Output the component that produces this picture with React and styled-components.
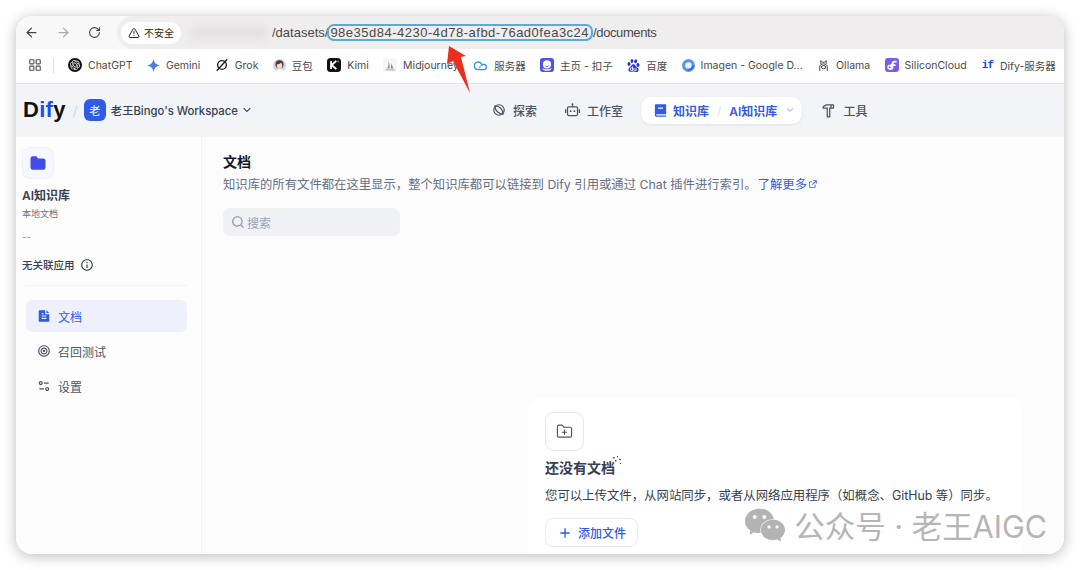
import React from 'react'
import styled, {createGlobalStyle} from 'styled-components'
import {ArrowLeft, ArrowRight, RotateCw, TriangleAlert, LayoutGrid, FolderPlus} from 'lucide-react'
import {SiOpenai, SiBaidu, SiWechat} from 'react-icons/si'
import {RiRobot2Line, RiHammerLine, RiBook2Fill, RiFileTextFill, RiFocus2Line, RiEqualizer2Line, RiSearchLine, RiAddLine, RiArrowDownSLine, RiExternalLinkLine, RiInformationLine} from 'react-icons/ri'

const sans = `Inter, "Noto Sans CJK SC", sans-serif`

const GlobalStyle = createGlobalStyle`
   html, body {margin:0; padding:0; background:#fff; font-family:${sans};}
   * {box-sizing:border-box;}
`

const Star = () => (
   <svg width="13" height="13" viewBox="0 0 24 24"><path fill="#4f7fd8" d="M12 0c1 7 5 11 12 12-7 1-11 5-12 12-1-7-5-11-12-12 7-1 11-5 12-12z" /></svg>
)
const GrokIcon = () => (
   <svg width="14" height="14" viewBox="0 0 24 24" fill="none" stroke="#222" strokeWidth="2.4"><circle cx="12" cy="12" r="7.5" /><path d="M21 2 3 22" /></svg>
)
const DoubaoIcon = () => (
   <svg width="13" height="15" viewBox="0 0 24 24"><circle cx="12" cy="12" r="12" fill="#c9d8f0" /><circle cx="12" cy="10" r="7.5" fill="#5b3a2c" /><ellipse cx="12" cy="12" rx="5" ry="6" fill="#f6dccc" /><path fill="#5b3a2c" d="M7 10c2 0 7-1 8-4l2 4-1-6H8z" /><path fill="#fff" d="M6 24c0-4 3-6 6-6s6 2 6 6z" /></svg>
)
const KimiIcon = () => (
   <svg width="14" height="14" viewBox="0 0 24 24"><rect width="24" height="24" rx="6" fill="#111" /><path fill="none" stroke="#fff" strokeWidth="3.2" d="M7 5v14M16 5l-8 7 8 7" /><circle cx="19" cy="6" r="1.6" fill="#2a8cff" /></svg>
)
const SailIcon = () => (
   <svg width="14" height="14" viewBox="0 0 24 24"><rect width="24" height="24" rx="3" fill="#f6f6f7" /><path fill="#8a8a8a" d="M9 5c1 4 1 9-2 13h4c1-5 0-9-2-13zM13 8c2 3 4 7 5 10h-5c1-3 1-7 0-10zM4 19.500h16V21H4z" /></svg>
)
const CloudIcon = () => (
   <svg width="15" height="14" viewBox="0 0 24 24" fill="none" strokeWidth="2.2"><path stroke="#2f8fe0" d="M17.500 20H8a6.500 6.500 0 1 1 6-9h3.500a4.500 4.500 0 1 1 0 9Z" /><path stroke="#58c0ee" d="M9 20c0-4 3-7 7-8" /></svg>
)
const CozeIcon = () => (
   <svg width="14" height="14" viewBox="0 0 24 24"><rect width="24" height="24" rx="5" fill="#4d53e8" /><circle cx="12" cy="11" r="7" fill="#fff" /><path fill="#fff" d="M4 17c3 3 13 3 16 0-1 4-4 5-8 5s-7-1-8-5z" /><path fill="#4d53e8" d="M8 12c2 2.500 6 2.500 8 0-1 4-7 4-8 0z" /></svg>
)
const ImagenIcon = () => (
   <svg width="13" height="13" viewBox="0 0 24 24"><circle cx="12" cy="12" r="12" fill="#5a96ea" /><circle cx="12" cy="12" r="6" fill="#eaf2ff" /><path fill="#2f6fd0" d="M12 18a6 6 0 0 0 6-6h4a10 10 0 0 1-13 9z" /></svg>
)
const OllamaIcon = () => (
   <svg width="13" height="15" viewBox="0 0 24 24" fill="none" stroke="#444" strokeWidth="1.8"><path d="M7 9V3l3 3h4l3-3v6" /><path d="M5 22v-7c0-4 3-6 7-6s7 2 7 6v7" /><ellipse cx="12" cy="15" rx="4" ry="3" /></svg>
)
const SiliconIcon = () => (
   <svg width="14" height="14" viewBox="0 0 24 24"><rect width="24" height="24" rx="5" fill="#7c5ce6" /><path fill="none" stroke="#fff" strokeWidth="3" d="M20 6h-3a4 4 0 0 0-4 4v5a4 4 0 0 1-4 4M9 12h9" /><circle cx="8" cy="16" r="3" fill="none" stroke="#fff" strokeWidth="2.500" /></svg>
)
const ExploreIcon = () => (
   <svg width="14" height="14" viewBox="0 0 24 24" fill="none" stroke="#4b5563" strokeWidth="2"><circle cx="12" cy="12" r="9" /><path d="M5 5c8 0 14 6 14 14-6 0-14-5-14-14z" /></svg>
)
const FolderIcon = () => (
   <svg width="18" height="18" viewBox="0 0 24 24"><path fill="#444ce7" d="M2 6a3 3 0 0 1 3-3h5l2 3h7a3 3 0 0 1 3 3v9a3 3 0 0 1-3 3H5a3 3 0 0 1-3-3z" /></svg>
)

const App = () => {
   return (
      <Page>
         <GlobalStyle />
         <Window>
            <Toolbar>
               <NavButtons>
                  <ArrowLeft size={15} color="#444" />
                  <ArrowRight size={15} color="#aaa" />
                  <RotateCw size={13} color="#444" />
               </NavButtons>
               <AddressBar>
                  <SecurityChip><TriangleAlert size={12} color="#222" />不安全</SecurityChip>
                  <BlurredHost />
                  <Url>/datasets/<Uuid>98e35d84-4230-4d78-afbd-76ad0fea3c24</Uuid><UrlTail>/documents</UrlTail></Url>
               </AddressBar>
            </Toolbar>
            <BookmarkBar>
               <AppsButton><LayoutGrid size={14} color="#555" /></AppsButton>
               {bookmarks.map(b => (
                  <Bookmark key={b.name}>{b.icon}<span>{b.name}</span></Bookmark>
               ))}
            </BookmarkBar>
            <Header>
               <Logo>D<b>if</b>y</Logo>
               <Slash>/</Slash>
               <Avatar>老</Avatar>
               <WorkspaceName>老王Bingo's Workspace</WorkspaceName>
               <RiArrowDownSLine size={14} color="#354052" />
               <Nav>
                  <NavItem><ExploreIcon />探索</NavItem>
                  <NavItem><RiRobot2Line size={15} />工作室</NavItem>
                  <ActiveNav>
                     <RiBook2Fill size={15} />知识库
                     <NavSlash>/</NavSlash>
                     AI知识库
                     <RiArrowDownSLine size={12} color="#a9b8ee" />
                  </ActiveNav>
                  <NavItem><RiHammerLine size={15} />工具</NavItem>
               </Nav>
            </Header>
            <Body>
               <Sidebar>
                  <FolderBox><FolderIcon /></FolderBox>
                  <DatasetName>AI知识库</DatasetName>
                  <DatasetType>本地文档</DatasetType>
                  <Dashes>--</Dashes>
                  <Linked>无关联应用<RiInformationLine size={14} color="#354052" /></Linked>
                  <Divider />
                  <Menu>
                     <MenuItem $active><RiFileTextFill size={14} />文档</MenuItem>
                     <MenuItem><RiFocus2Line size={14} />召回测试</MenuItem>
                     <MenuItem><RiEqualizer2Line size={14} />设置</MenuItem>
                  </Menu>
               </Sidebar>
               <Main>
                  <Title>文档</Title>
                  <Desc>知识库的所有文件都在这里显示，整个知识库都可以链接到 Dify 引用或通过 Chat 插件进行索引。<Link>了解更多<RiExternalLinkLine size={10} /></Link></Desc>
                  <SearchBox><RiSearchLine size={14} color="#8a93a6" />搜索</SearchBox>
                  <EmptyCard>
                     <EmptyIcon><FolderPlus size={17} color="#4b5563" strokeWidth={1.6} /></EmptyIcon>
                     <EmptyTitle>还没有文档</EmptyTitle>
                     <EmptyText>您可以上传文件，从网站同步，或者从网络应用程序（如概念、GitHub 等）同步。</EmptyText>
                     <AddButton><RiAddLine size={16} />添加文件</AddButton>
                  </EmptyCard>
               </Main>
            </Body>
            <Watermark><SiWechat size={40} color="#b3b3b3" />公众号 · 老王AIGC</Watermark>
         </Window>
         <Arrow width="34" height="54" viewBox="0 0 34 54"><path fill="#e8301f" d="M6 2 23 12 18 13 27 49 10 17 4 20z" /></Arrow>
         <Sparkle width="10" height="10" viewBox="0 0 10 10"><path fill="#444" d="M1 1h1.500v1.500H1zM5 0h1v1.500H5zM3 4h1.500v1.500H3zM7 3h2v1H7zM8 7h1v1H8z" /></Sparkle>
      </Page>
   )
}

const Page = styled.div`
   position:relative; width:1080px; height:570px; padding:16px; overflow:hidden; background:#fff;
`
const Window = styled.div`
   position:relative; width:1048px; height:538px; border-radius:16px; overflow:hidden;
   display:flex; flex-direction:column; background:#fcfcfd;
   box-shadow:0 2px 14px rgba(0,0,0,.28);
`
const Toolbar = styled.div`
   height:33px; display:flex; background:#f9f8f8; flex-shrink:0;
`
const NavButtons = styled.div`
   width:101px; padding:0 0 0 8px; display:flex; align-items:center; gap:17px;
`
const AddressBar = styled.div`
   flex:1; display:flex; align-items:center; background:#efedee; border-radius:16px 0 0 16px; padding-left:4px;
`
const SecurityChip = styled.div`
   width:60px; height:22px; border-radius:11px; background:#fff; display:flex; align-items:center; justify-content:center; gap:4px;
   font-size:10px; color:#222;
`
const BlurredHost = styled.div`
   width:76px; height:12px; margin:0 5px 0 10px; background:#e2e0e1; filter:blur(4px);
`
const Url = styled.div`
   font-family:"Liberation Sans", sans-serif; font-size:13px; color:#4a4a4a; display:flex; align-items:center; white-space:nowrap;
`
const Uuid = styled.span`
   height:17px; padding:0 2px 0 1px; border:2px solid #5aaad2; border-radius:7px; display:inline-flex; align-items:center; letter-spacing:.5px; margin-left:-1px;
`
const UrlTail = styled.span`
   letter-spacing:-.4px;
`
const BookmarkBar = styled.div`
   height:35px; padding:0 0 2px 12px; background:#fff; border-bottom:1px solid #e3e3e5; display:flex; align-items:center; gap:14.400px; flex-shrink:0; white-space:nowrap; overflow:hidden;
`
const AppsButton = styled.div`
   width:25.600px; height:15px; display:flex; align-items:center; border-right:1px solid #e0e0e0;
`
const Bookmark = styled.div`
   display:flex; align-items:center; gap:6px; font-size:10.500px; color:#4a4a4a;
   svg {flex-shrink:0;}
`
const GptBadge = styled.span`
   width:14px; height:14px; border-radius:50%; background:#111; display:flex; align-items:center; justify-content:center;
`
const IfMark = styled.span`
   width:13px; font-family:"Liberation Mono", monospace; font-weight:700; font-size:11px; letter-spacing:-1px; color:#1c44e0; text-align:center;
`
const Header = styled.div`
   height:52px; background:#f2f4f7; display:flex; align-items:center; padding-left:7px; flex-shrink:0;
`
const Logo = styled.div`
   font-family:"Liberation Sans", sans-serif; font-weight:700; font-size:22px; color:#111; letter-spacing:.3px;
   b {color:#1c4fe8;}
`
const Slash = styled.span`
   margin:0 6px 0 7px; color:#d4d7de; font-size:14px;
`
const Avatar = styled.div`
   width:22px; height:22px; border-radius:6px; background:#2f5be7; color:#fff; font-size:11px; display:flex; align-items:center; justify-content:center; margin-right:5px;
`
const WorkspaceName = styled.div`
   font-size:11.300px; color:#354052; font-weight:500; margin-right:2px; white-space:nowrap;
`
const Nav = styled.nav`
   display:flex; align-items:center; margin-left:238px; gap:28px;
`
const NavItem = styled.div`
   display:flex; align-items:center; gap:7px; font-size:12px; font-weight:500; color:#4b5563;
   svg {flex-shrink:0;}
`
const ActiveNav = styled(NavItem)`
   height:27px; padding:0 6px 0 12px; border-radius:10px; background:#fff; color:#2f5be7; font-weight:600;
   box-shadow:0 1px 3px rgba(16,24,40,.08);
   margin:0 -9px 0 -10px;
   svg:first-child {margin-right:-2px;}
`
const NavSlash = styled.span`
   color:#dfe2e8; font-weight:400; margin:0 1px;
`
const Body = styled.div`
   flex:1; display:flex; min-height:0; border-top:1px solid #f5f6f8;
`
const Sidebar = styled.aside`
   width:186px; flex-shrink:0; padding:10px 14px 0 6px; border-right:1px solid #f2f4f7; background:#fdfdfe; display:flex; flex-direction:column; align-items:flex-start;
`
const FolderBox = styled.div`
   width:32px; height:32px; border-radius:8px; background:#f5f8ff; border:1px solid #eef1f8; display:flex; align-items:center; justify-content:center;
`
const DatasetName = styled.div`
   margin-top:7px; font-size:12px; font-weight:600; color:#354052;
`
const DatasetType = styled.div`
   margin-top:4px; font-size:9px; color:#676f83;
`
const Dashes = styled.div`
   margin-top:11px; font-size:10px; color:#8a93a6;
`
const Linked = styled.div`
   margin-top:14px; display:flex; align-items:center; gap:5px; font-size:10.500px; font-weight:500; color:#354052;
`
const Divider = styled.div`
   width:162px; height:1px; margin:13px 0 14px 3px; background:#f2f4f7;
`
const Menu = styled.div`
   width:161px; margin-left:4px; display:flex; flex-direction:column; gap:3px;
`
const MenuItem = styled.div`
   height:32px; padding-left:11px; display:flex; align-items:center; gap:7px; border-radius:7px; font-size:12px;
   color:${p => p.$active ? '#2f5be7' : '#4b5563'};
   background:${p => p.$active ? '#eef1fc' : 'transparent'};
`
const Main = styled.main`
   flex:1; min-width:0; padding:16px 42px 0 21px; background:#fcfcfd; overflow:hidden;
`
const Title = styled.div`
   font-size:14px; font-weight:600; color:#101828; line-height:18px;
`
const Desc = styled.div`
   margin-top:5px; font-size:12.350px; line-height:18px; color:#676f83; white-space:nowrap;
`
const Link = styled.span`
   margin-left:1px; color:#2f5be7; svg {margin-left:1px;}
`
const SearchBox = styled.div`
   width:177px; height:28px; margin-top:14px; padding-left:8px; border-radius:7px; background:#f0f1f5; display:flex; align-items:center; gap:2px; font-size:12px; color:#98a2b2;
`
const EmptyCard = styled.div`
   width:494px; height:260px; margin:162px 0 0 305px; padding:14px 17px; border-radius:12px; background:#fff;
`
const EmptyIcon = styled.div`
   width:39px; height:39px; border:1px solid #e4e7ec; border-radius:9px; display:flex; align-items:center; justify-content:center; background:#fff;
`
const EmptyTitle = styled.div`
   margin-top:8px; font-size:14px; font-weight:600; color:#354052; line-height:18px;
`
const EmptyText = styled.div`
   margin-top:10px; font-size:12.400px; line-height:18px; color:#354052; white-space:nowrap;
`
const AddButton = styled.div`
   width:93px; height:29px; margin-top:13px; border:1px solid #e8ebf0; border-radius:8px; background:#fff; display:flex; align-items:center; justify-content:center; gap:5px; font-size:12px; font-weight:500; color:#2f5be7;
`
const Watermark = styled.div`
   position:absolute; right:17px; bottom:7px; display:flex; align-items:center; gap:9px; font-size:30.500px; color:#b5b5b5; white-space:nowrap;
`
const Arrow = styled.svg`
   position:absolute; left:443px; top:44px;
`
const Sparkle = styled.svg`
   position:absolute; left:612px; top:456px;
`

const bookmarks = [
   {name: 'ChatGPT', icon: <GptBadge><SiOpenai size={10} color="#fff" /></GptBadge>},
   {name: 'Gemini', icon: <Star />},
   {name: 'Grok', icon: <GrokIcon />},
   {name: '豆包', icon: <DoubaoIcon />},
   {name: 'Kimi', icon: <KimiIcon />},
   {name: 'Midjourney', icon: <SailIcon />},
   {name: '服务器', icon: <CloudIcon />},
   {name: '主页 - 扣子', icon: <CozeIcon />},
   {name: '百度', icon: <SiBaidu size={13} color="#2b32d9" />},
   {name: 'Imagen - Google D...', icon: <ImagenIcon />},
   {name: 'Ollama', icon: <OllamaIcon />},
   {name: 'SiliconCloud', icon: <SiliconIcon />},
   {name: 'Dify-服务器', icon: <IfMark>if</IfMark>},
]

export default App
